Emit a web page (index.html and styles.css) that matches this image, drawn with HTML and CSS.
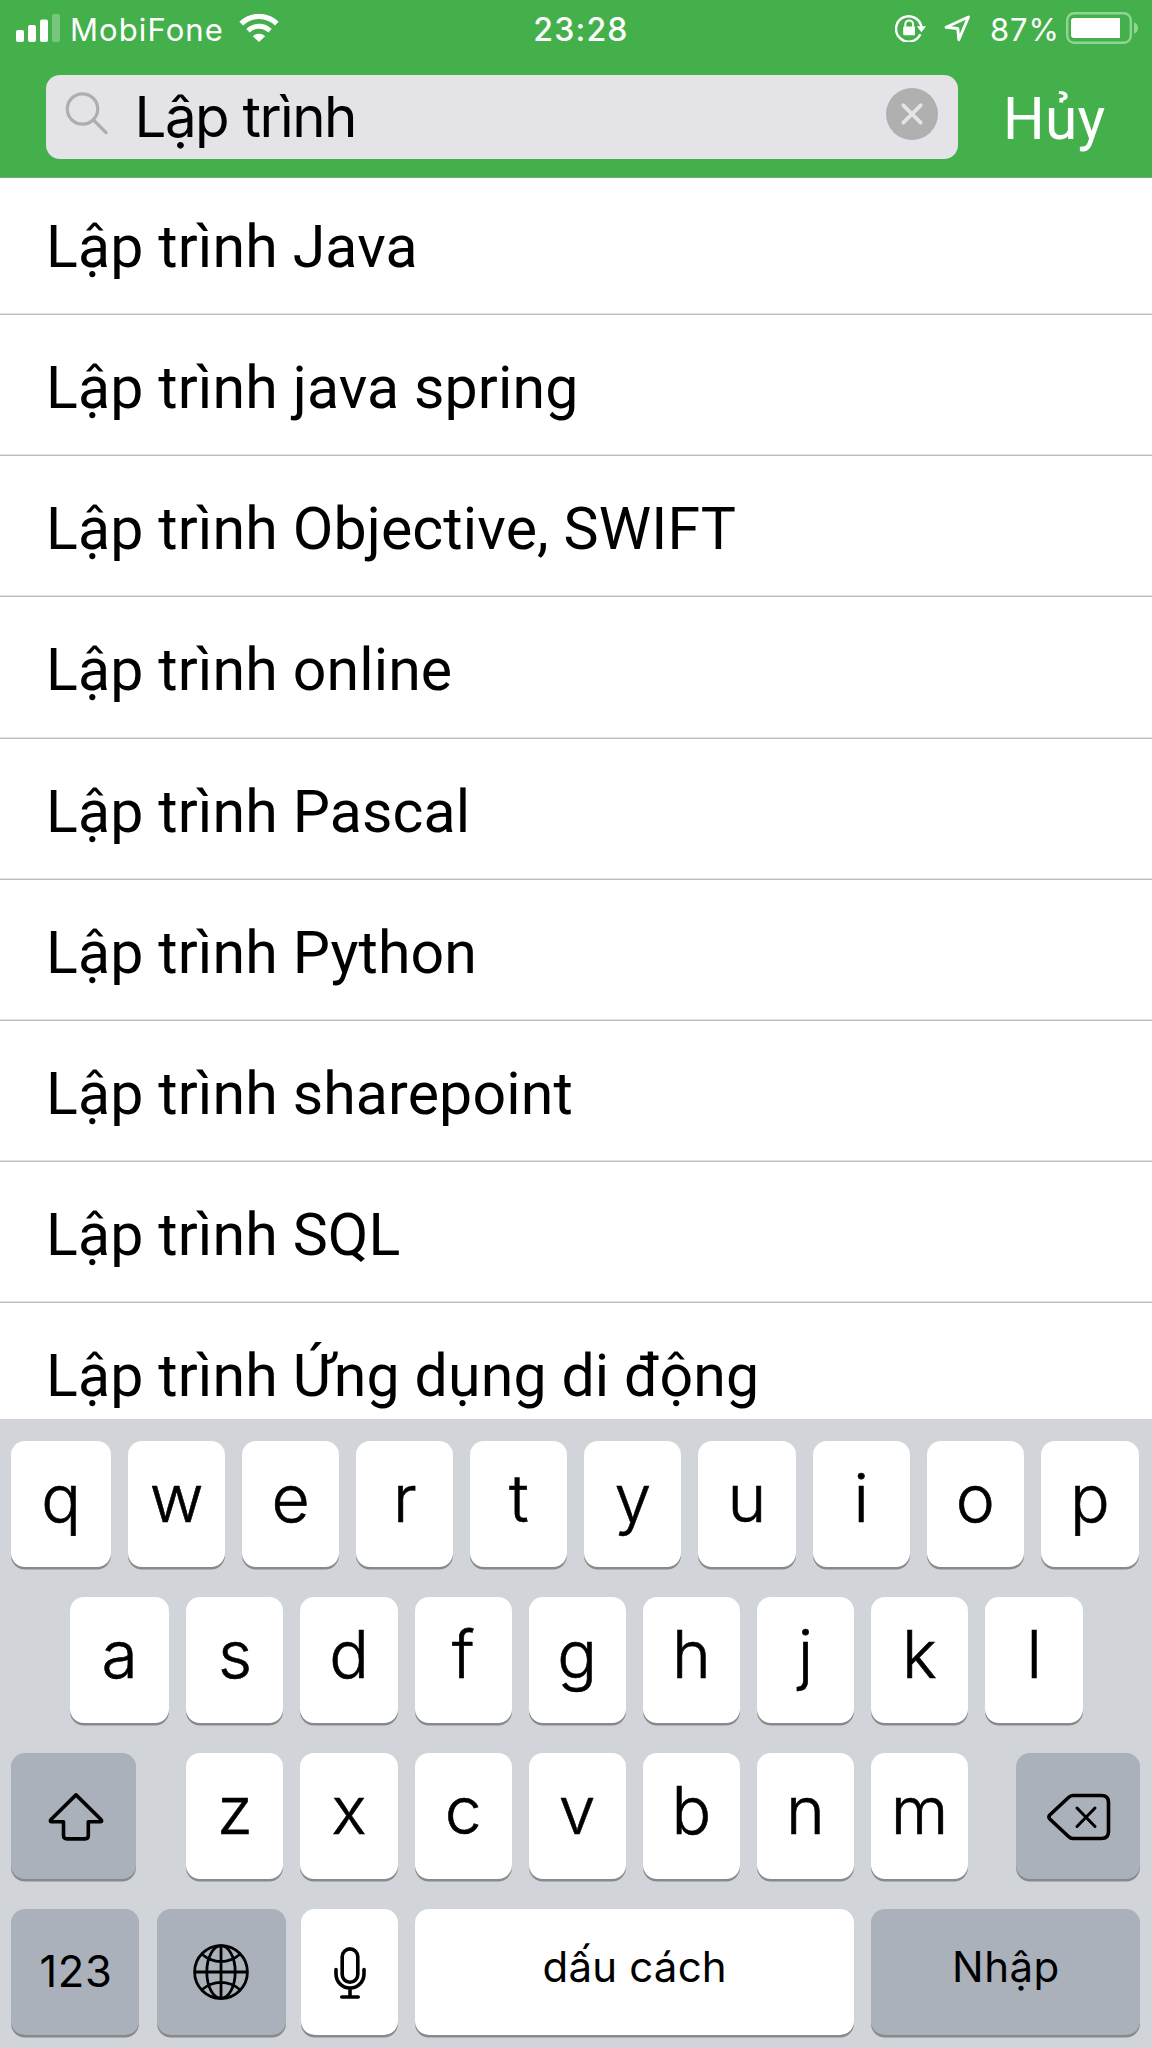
FILE: index.html
```html
<!DOCTYPE html>
<html lang="vi">
<head>
<meta charset="utf-8">
<title>Tìm kiếm</title>
<link rel="stylesheet" href="styles.css">
</head>
<body>
<div class="screen">
  <header class="header">
    <div class="status">
      <div class="status-left">
        <svg class="signal" width="44" height="28" viewBox="0 0 44 28" fill="#fff">
          <rect x="0" y="16" width="8" height="12" rx="2"/>
          <rect x="12" y="11" width="8" height="17" rx="2"/>
          <rect x="24" y="5.500" width="8" height="22.500" rx="2"/>
          <rect x="36" y="0" width="8" height="28" rx="2" opacity=".28"/>
        </svg>
        <span class="carrier">MobiFone</span>
        <svg class="wifi" width="40" height="28" viewBox="0 0 40 28">
          <path d="M2.200 9.700a25.300 25.300 0 0 1 35.600 0" fill="none" stroke="#fff" stroke-width="5.200"/>
          <path d="M9 16.700a15.800 15.800 0 0 1 22 0" fill="none" stroke="#fff" stroke-width="4.800"/>
          <path d="M13.800 22.200a9.200 9.200 0 0 1 12.400 0L20 28z" fill="#fff"/>
        </svg>
      </div>
      <span class="clock">23:28</span>
      <div class="status-right">
        <svg class="lock" width="32" height="28" viewBox="0 0 32 28" fill="none" stroke="#fff">
          <path d="M25.300 20.200A12.700 12.700 0 1 1 26.300 13" stroke-width="2.500"/>
          <path d="M21.800 12.300h9.200l-4.600 6z" fill="#fff" stroke="none"/>
          <path d="M10.300 13v-2.700a3.900 3.900 0 0 1 7.800 0V13" stroke-width="2"/>
          <rect x="8.200" y="12.500" width="11.800" height="8.800" rx="1" fill="#fff" stroke="none"/>
        </svg>
        <svg class="arrow" width="27" height="27" viewBox="0 0 27 27">
          <path d="M2 12.300 24.500 2 14.800 24.700 13.800 13.500z" fill="none" stroke="#fff" stroke-width="2.900" stroke-linejoin="round"/>
        </svg>
        <span class="percent">87%</span>
        <svg class="battery" width="73" height="32" viewBox="0 0 73 32">
          <rect x="1.200" y="1.200" width="63.600" height="29.600" rx="7" fill="none" stroke="#8fd694" stroke-width="2.400"/>
          <path d="M54 6v20H8a3 3 0 0 1-3-3V9a3 3 0 0 1 3-3z" fill="#fff"/>
          <path d="M68 10.300q4 1.700 4 5.700t-4 5.700z" fill="#8fd694"/>
        </svg>
      </div>
    </div>
    <div class="searchbar">
      <div class="field">
        <svg class="glass" width="44" height="44" viewBox="0 0 44 44" fill="none" stroke="#aeaeb1" stroke-width="3.200" stroke-linecap="round">
          <circle cx="17.500" cy="17" r="15.200"/>
          <path d="M28.400 28 41 40.500"/>
        </svg>
        <span class="query">Lập trình</span>
        <svg class="clear" width="52" height="52" viewBox="0 0 52 52">
          <circle cx="26" cy="26" r="26" fill="#b0b0b1"/>
          <path d="M17.300 17.300 34.700 34.700M34.700 17.300 17.300 34.700" stroke="#e4e3e8" stroke-width="3.800" stroke-linecap="round"/>
        </svg>
      </div>
      <span class="cancel">Hủy</span>
    </div>
  </header>

  <ul class="results">
    <li>Lập trình Java</li>
    <li>Lập trình java spring</li>
    <li>Lập trình Objective, SWIFT</li>
    <li>Lập trình online</li>
    <li>Lập trình Pascal</li>
    <li>Lập trình Python</li>
    <li>Lập trình sharepoint</li>
    <li>Lập trình SQL</li>
    <li>Lập trình Ứng dụng di động</li>
  </ul>

  <div class="keyboard">
    <div class="row row-1">
      <div class="key">q</div><div class="key">w</div><div class="key">e</div><div class="key">r</div><div class="key">t</div><div class="key">y</div><div class="key">u</div><div class="key">i</div><div class="key">o</div><div class="key">p</div>
    </div>
    <div class="row row-2">
      <div class="key">a</div><div class="key">s</div><div class="key">d</div><div class="key">f</div><div class="key">g</div><div class="key">h</div><div class="key">j</div><div class="key">k</div><div class="key">l</div>
    </div>
    <div class="row row-3">
      <div class="key dark shift">
        <svg width="56" height="48" viewBox="0 0 56 48" fill="none" stroke="#000" stroke-width="3.600" stroke-linejoin="round">
          <path d="M28 1.900 53 26.500Q54.500 28.500 52.500 28.700H40.300V42.500q0 3.400-3.400 3.400H18.900q-3.400 0-3.400-3.400V28.700H3.500Q1.500 28.500 3 26.500z"/>
        </svg>
      </div>
      <div class="letters">
        <div class="key">z</div><div class="key">x</div><div class="key">c</div><div class="key">v</div><div class="key">b</div><div class="key">n</div><div class="key">m</div>
      </div>
      <div class="key dark delete">
        <svg width="64" height="48" viewBox="0 0 64 48" fill="none" stroke="#000" stroke-width="3.600" stroke-linejoin="round" stroke-linecap="round">
          <path d="M26 2.500H54.500q7 0 7 7v29q0 7-7 7H26q-2.500 0-4.500-2L2.800 26Q1 24 2.800 22L21.500 4.500q2-2 4.500-2z"/>
          <path d="M30 15 48 33.500M48 15 30 33.500" stroke-width="3"/>
        </svg>
      </div>
    </div>
    <div class="row row-4">
      <div class="key dark numbers">123</div>
      <div class="key dark globe">
        <svg width="56" height="56" viewBox="0 0 56 56" fill="none" stroke="#000" stroke-width="2.800">
          <circle cx="28" cy="28" r="26.400"/>
          <ellipse cx="28" cy="28" rx="14.200" ry="26.400"/>
          <path d="M28 1.600v52.800M1.600 28h52.800M9 10.300q8.500 7.300 19 7.300t19-7.300M9 45.700q8.500-7.300 19-7.300t19 7.300"/>
        </svg>
      </div>
      <div class="key mic">
        <svg width="32" height="52" viewBox="0 0 32 52" fill="none" stroke="#000" stroke-width="3.600" stroke-linecap="round">
          <rect x="8.200" y="1.900" width="15.600" height="33.400" rx="7.800"/>
          <path d="M2 22.500v4.500a14 14 0 0 0 28 0v-4.500M16 41v9M7.800 50h16.400"/>
        </svg>
      </div>
      <div class="key space">dấu cách</div>
      <div class="key dark enter">Nhập</div>
    </div>
  </div>
</div>
</body>
</html>
```
FILE: styles.css
```css
* { box-sizing: border-box; }
body { margin: 0; background: #fff; }
svg { display: block; flex: none; }

.screen {
  width: 1152px;
  height: 2048px;
  display: flex;
  flex-direction: column;
  overflow: hidden;
  color: #000;
  font-family: Inter, "Liberation Sans", sans-serif;
}

/* header */
.header {
  flex: none;
  height: 178px;
  background: #44b04c;
  border-bottom: 1px solid #76a67b;
  color: #fff;
}
.status {
  display: grid;
  grid-template-columns: 1fr auto 1fr;
  height: 75px;
  padding: 0 13px 16px 16px;
  align-items: center;
  font-size: 31px;
  line-height: 38px;
  white-space: nowrap;
}
.status-left, .status-right { display: flex; align-items: center; }
.status-right { justify-content: flex-end; }
.signal { margin-top: -3px; }
.carrier { width: 169px; margin-left: 10px; letter-spacing: 1.1px; }
.wifi { margin-top: -3px; }
.clock { font-weight: 500; font-size: 32px; letter-spacing: 1.200px; padding-left: 7px; }
.lock { margin: -3px 17px 0 0; }
.arrow { margin: -2px 19px 0 0; }
.percent { width: 76px; letter-spacing: .900px; }
.battery { margin-top: -3px; }

.searchbar { display: flex; padding-left: 46px; height: 84px; }
.field {
  display: flex;
  width: 912px;
  height: 84px;
  padding: 0 20px 0 19px;
  border-radius: 14px;
  background: #e4e3e8;
  color: #000;
}
.glass { margin: 17px 25.500px 0 0; }
.query { flex: 1; font-size: 56.500px; line-height: 83px; letter-spacing: -1.550px; }
.clear { margin-top: 13px; }
.cancel {
  margin-left: 45px;
  font-family: Roboto, sans-serif;
  font-size: 58.500px;
  line-height: 88px;
  letter-spacing: .300px;
}

/* suggestions */
.results {
  flex: none;
  height: 1241px;
  margin: 0;
  padding: 0;
  overflow: hidden;
  list-style: none;
  font-family: Roboto, sans-serif;
  font-size: 59px;
  letter-spacing: .140px;
}
.results li {
  display: flex;
  align-items: center;
  height: 141.200px;
  padding: 5px 0 0 46px;
  border-bottom: 1px solid #bcbcbe;
  box-shadow: inset 0 -1px #e2e2e3;
}
.results li:first-child { height: 137px; padding-top: .600px; }

/* keyboard */
.keyboard {
  flex: none;
  height: 629px;
  padding-top: 22px;
  background: #d1d4d9;
}
.row { display: flex; height: 126px; margin-bottom: 30px; }
.row-1 { padding-left: 11px; gap: 17px; }
.row-2 { padding-left: 70px; gap: 17px; }
.row-3, .row-4 { padding-left: 11px; }
.letters { display: flex; gap: 17px; margin: 0 47.500px 0 50.400px; }
.key {
  flex: none;
  display: flex;
  align-items: center;
  justify-content: center;
  width: 97.100px;
  height: 125.500px;
  padding-bottom: 11.600px;
  border-radius: 14px;
  background: #fff;
  box-shadow: 0 2.500px 0 #88898d;
  font-size: 66px;
  font-weight: 300;
  line-height: 80px;
  -webkit-text-stroke: .600px #000;
}
.row-1 .key:first-child { width: 100px; }
.row-2 .key:first-child { width: 99.400px; }
.row-1 .key:last-child, .row-2 .key:last-child { width: 98.400px; }
.key.dark { background: #abb1bb; }
.key.shift { width: 125px; padding: 2px 0 0 4px; }
.key.delete { width: 124.500px; padding: 2px 0 0 2px; }
.row-4 .key { font-weight: 400; -webkit-text-stroke: 0; }
.row-4 .numbers { width: 128px; font-size: 43.500px; letter-spacing: .600px; padding: 0 0 2px 2px; }
.row-4 .globe { width: 129px; margin-left: 18px; padding: 0 1px 0 0; }
.row-4 .mic { margin-left: 14.600px; padding: 2px 0 0 1px; }
.row-4 .space { width: 439px; margin-left: 17px; font-size: 42px; letter-spacing: .200px; padding: 0 0 9px 1px; }
.row-4 .enter { width: 269.500px; margin-left: 17px; font-size: 42px; letter-spacing: .500px; padding: 0 0 9px 1px; }
```
